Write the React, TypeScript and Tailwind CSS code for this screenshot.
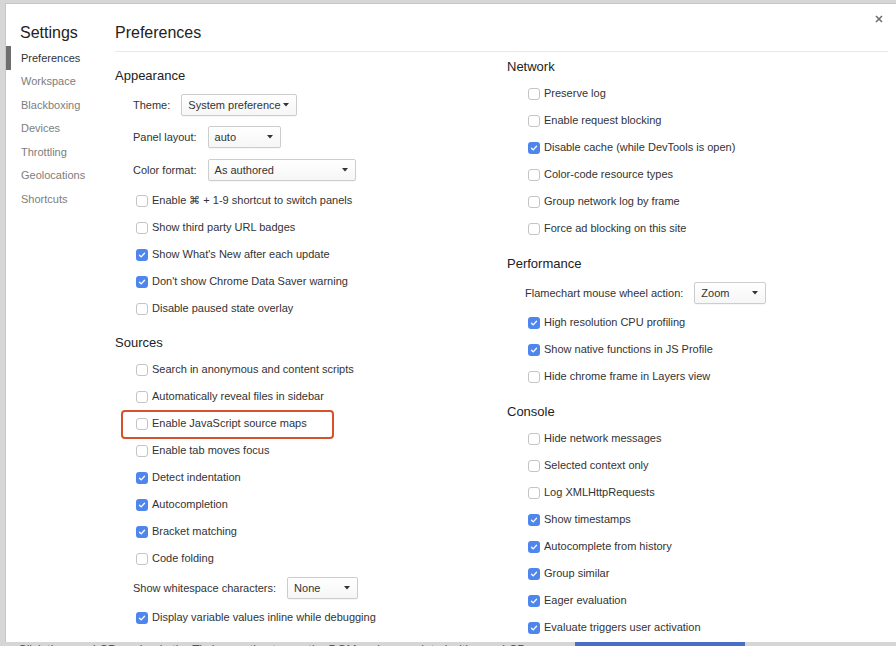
import React from "react";

type Item = { label: string; checked?: boolean; highlight?: boolean };

function Checkbox({ checked }: { checked?: boolean }) {
  if (checked) {
    return (
      <span className="flex h-[12px] w-[12px] shrink-0 items-center justify-center rounded-[3px] bg-[#4f86ec]">
        <svg width="8" height="8" viewBox="0 0 8 8" fill="none">
          <path d="M1.5 4.2 L3.2 5.9 L6.5 2.2" stroke="white" strokeWidth="1.3" strokeLinecap="round" strokeLinejoin="round" />
        </svg>
      </span>
    );
  }
  return <span className="h-[12px] w-[12px] shrink-0 rounded-[3px] border border-[#c4c4c4] bg-white" />;
}

function CheckRow({ item }: { item: Item }) {
  return (
    <div className="relative flex h-[27px] items-center gap-[4px] pl-[21px]">
      <Checkbox checked={item.checked} />
      <span>{item.label}</span>
      {item.highlight && (
        <span className="pointer-events-none absolute left-[6px] top-0 h-[29px] w-[213px] rounded-[4px] border-2 border-[#d6522c]" />
      )}
    </div>
  );
}

function Select({ value, width }: { value: string; width: string }) {
  return (
    <div
      className={`flex h-[22px] items-center justify-between rounded-[2px] border border-[#cdcdcd] bg-gradient-to-b from-white to-[#f6f6f6] pl-[6px] pr-[7px] shadow-[0_1px_1px_rgba(0,0,0,0.04)] ${width}`}
    >
      <span>{value}</span>
      <svg width="6" height="4" viewBox="0 0 6 4">
        <path d="M0 0 H6 L3 3.5 Z" fill="#333" />
      </svg>
    </div>
  );
}

function SelectRow({ label, value, width, h }: { label: string; value: string; width: string; h: string }) {
  return (
    <div className={`flex items-center gap-[11px] pl-[18px] ${h}`}>
      <span>{label}</span>
      <Select value={value} width={width} />
    </div>
  );
}

function Heading({ children, mt }: { children: React.ReactNode; mt: string }) {
  return <div className={`mb-[4px] h-[18px] text-[13px] leading-[18px] text-[#222] ${mt}`}>{children}</div>;
}

const appearance: Item[] = [
  { label: "Enable ⌘ + 1-9 shortcut to switch panels" },
  { label: "Show third party URL badges" },
  { label: "Show What's New after each update", checked: true },
  { label: "Don't show Chrome Data Saver warning", checked: true },
  { label: "Disable paused state overlay" },
];

const sources: Item[] = [
  { label: "Search in anonymous and content scripts" },
  { label: "Automatically reveal files in sidebar" },
  { label: "Enable JavaScript source maps", highlight: true },
  { label: "Enable tab moves focus" },
  { label: "Detect indentation", checked: true },
  { label: "Autocompletion", checked: true },
  { label: "Bracket matching", checked: true },
  { label: "Code folding" },
];

const network: Item[] = [
  { label: "Preserve log" },
  { label: "Enable request blocking" },
  { label: "Disable cache (while DevTools is open)", checked: true },
  { label: "Color-code resource types" },
  { label: "Group network log by frame" },
  { label: "Force ad blocking on this site" },
];

const performance: Item[] = [
  { label: "High resolution CPU profiling", checked: true },
  { label: "Show native functions in JS Profile", checked: true },
  { label: "Hide chrome frame in Layers view" },
];

const consoleItems: Item[] = [
  { label: "Hide network messages" },
  { label: "Selected context only" },
  { label: "Log XMLHttpRequests" },
  { label: "Show timestamps", checked: true },
  { label: "Autocomplete from history", checked: true },
  { label: "Group similar", checked: true },
  { label: "Eager evaluation", checked: true },
  { label: "Evaluate triggers user activation", checked: true },
];

const tabs = ["Preferences", "Workspace", "Blackboxing", "Devices", "Throttling", "Geolocations", "Shortcuts"];

export default function App() {
  return (
    <div className="flex h-[646px] w-[896px] flex-col overflow-hidden bg-[#d6d6d6] font-['Liberation_Sans',Arial,sans-serif] text-[11px] text-[#333]">
      <div className="ml-[5px] mt-[3px] flex h-[639px] shrink-0 border-l border-t border-[#c6c6c6] bg-white">
        {/* sidebar */}
        <div className="w-[109px] shrink-0">
          <div className="pl-[14px] pt-[19px] text-[16px] leading-[20px] text-[#222]">Settings</div>
          <div className="mt-[3px] flex flex-col">
            {tabs.map((t, i) => (
              <div key={t} className="relative flex h-[23.5px] items-center pl-[15px]">
                {i === 0 && <span className="absolute left-0 top-0 h-[24px] w-[5px] bg-[#6e6e6e]" />}
                <span className={i === 0 ? "text-[#333]" : "text-[#7d7d7d]"}>{t}</span>
              </div>
            ))}
          </div>
        </div>

        {/* content */}
        <div className="relative flex-1">
          <div className="mr-[8px] flex h-[48px] items-end border-b border-[#e8e8e8] pb-[8px]">
            <span className="text-[16px] leading-[20px] text-[#222]">Preferences</span>
          </div>
          <svg className="absolute right-[13px] top-[11px]" width="8" height="8" viewBox="0 0 8 8">
            <path d="M1 1 L7 7 M7 1 L1 7" stroke="#6f6f6f" strokeWidth="1.6" />
          </svg>

          <div className="flex">
            <div className="w-[392px]">
              <Heading mt="mt-[15px]">Appearance</Heading>
              <SelectRow label="Theme:" value="System preference" width="w-[116px]" h="h-[32px]" />
              <SelectRow label="Panel layout:" value="auto" width="w-[73px]" h="h-[32px]" />
              <SelectRow label="Color format:" value="As authored" width="w-[148px]" h="h-[34px]" />
              {appearance.map((it) => (
                <CheckRow key={it.label} item={it} />
              ))}
              <Heading mt="mt-[12px]">Sources</Heading>
              {sources.map((it) => (
                <CheckRow key={it.label} item={it} />
              ))}
              <SelectRow label="Show whitespace characters:" value="None" width="w-[71px]" h="h-[32px]" />
              <CheckRow item={{ label: "Display variable values inline while debugging", checked: true }} />
            </div>

            <div className="flex-1">
              <Heading mt="mt-[6px]">Network</Heading>
              {network.map((it) => (
                <CheckRow key={it.label} item={it} />
              ))}
              <Heading mt="mt-[13px]">Performance</Heading>
              <SelectRow label="Flamechart mouse wheel action:" value="Zoom" width="w-[72px]" h="h-[32px]" />
              {performance.map((it) => (
                <CheckRow key={it.label} item={it} />
              ))}
              <Heading mt="mt-[13px]">Console</Heading>
              {consoleItems.map((it) => (
                <CheckRow key={it.label} item={it} />
              ))}
            </div>
          </div>
        </div>
      </div>

      {/* page behind the dialog */}
      <div className="flex h-[4px] items-start overflow-hidden">
        <div className="ml-[18px] w-[540px] overflow-hidden whitespace-nowrap pt-[2px] text-[12px] leading-[12px] text-[#555]">
          Click the new LCP marker in the Timing section to see the DOM node associated with your LCP
        </div>
        <div className="ml-[17px] h-[4px] w-[170px] bg-[#4a6ec6]" />
      </div>
    </div>
  );
}
